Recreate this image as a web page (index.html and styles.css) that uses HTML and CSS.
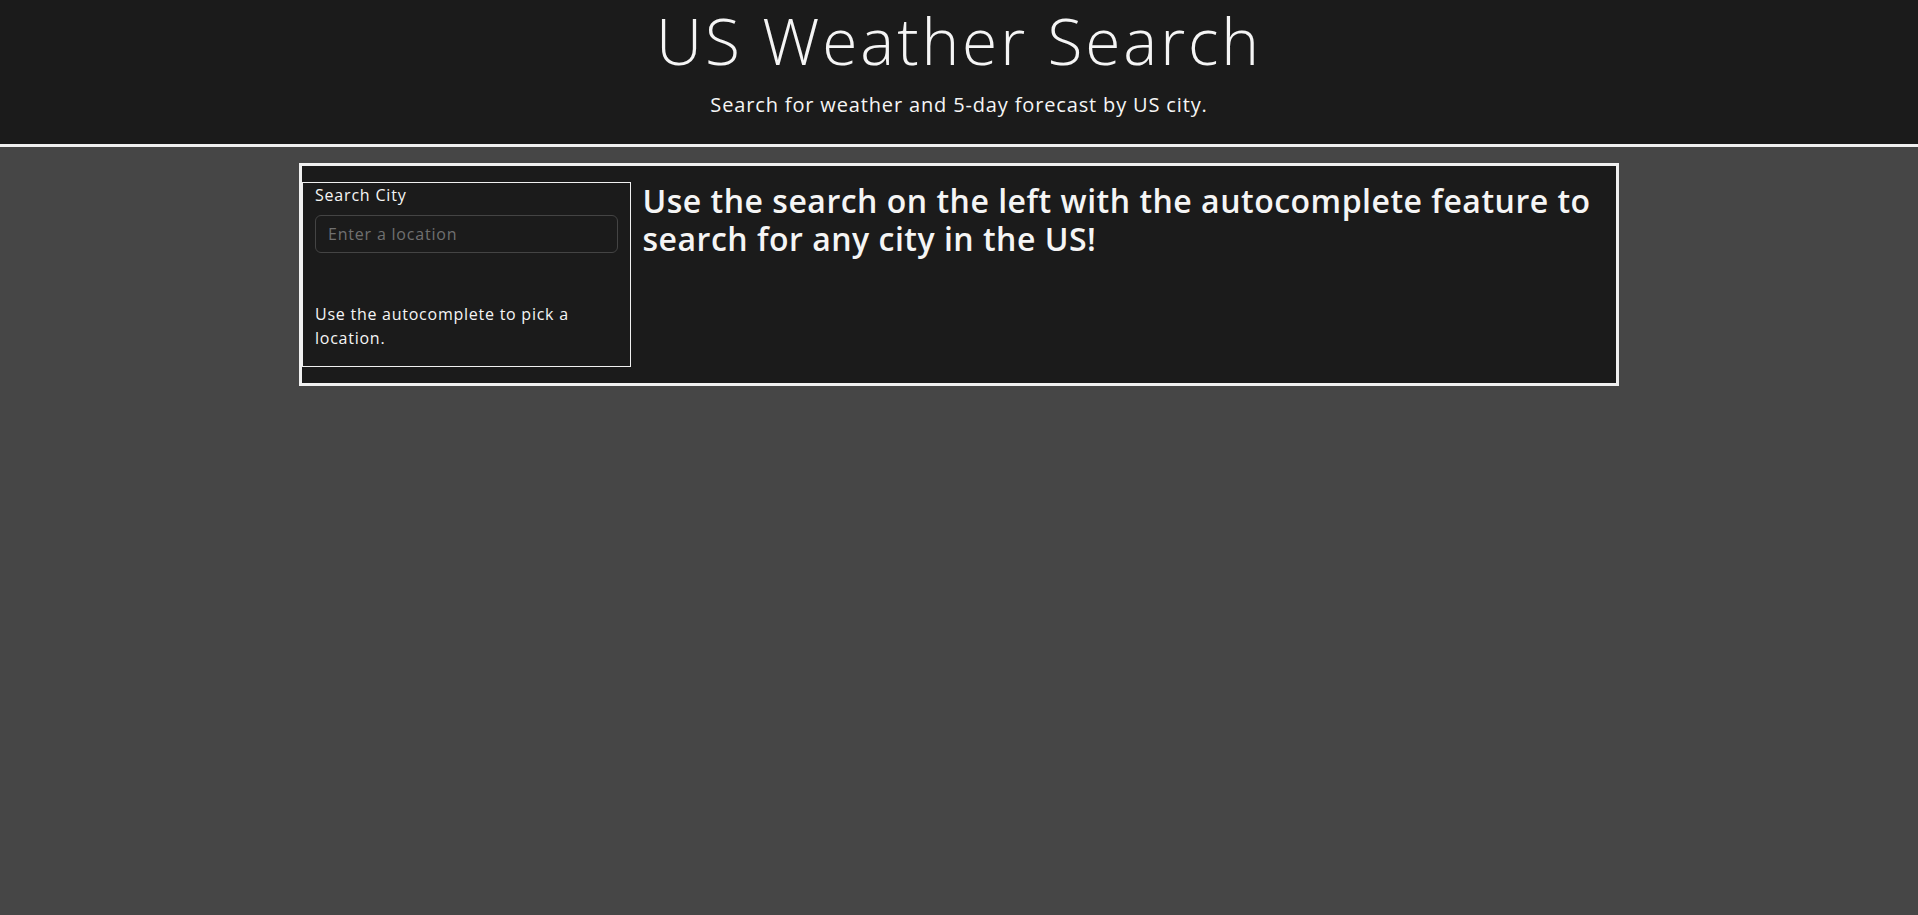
FILE: index.html
```html
<!DOCTYPE html>
<html lang="en">
<head>
<meta charset="utf-8">
<title>US Weather Search</title>
<link rel="stylesheet" href="styles.css">
</head>
<body>
<header class="site-header">
  <h1 class="title">US Weather Search</h1>
  <p class="lead">Search for weather and 5-day forecast by US city.</p>
</header>
<main class="container">
  <div class="row">
    <aside class="col-side">
      <label class="form-label" for="city">Search City</label>
      <input class="form-control" id="city" type="text" placeholder="Enter a location">
      <p class="hint">Use the autocomplete to pick a location.</p>
    </aside>
    <section class="col-main">
      <h2 class="intro">Use the search on the left with the autocomplete feature to search for any city in the US!</h2>
    </section>
  </div>
</main>
</body>
</html>
```
FILE: styles.css
```css
* { box-sizing: border-box; }
html, body { margin: 0; padding: 0; }
body {
  background: #464646;
  color: #f5f5f5;
  font-family: "Open Sans", "Noto Sans", sans-serif;
  font-size: 16px;
  line-height: 1.5;
}
.site-header {
  background: #1b1b1b;
  border-bottom: 3px solid #f0f0f0;
  text-align: center;
  padding: 3px 0 8px;
}
.title {
  margin: 0 0 10px;
  font-size: 64px;
  font-weight: 300;
  line-height: 1.2;
  letter-spacing: 2.9px;
}
.lead {
  margin: 0 0 16px;
  font-size: 20px;
  font-weight: 400;
  line-height: 1.5;
  letter-spacing: 0.85px;
}
.container {
  width: 1320px;
  margin: 16px auto 0;
  background: #1b1b1b;
  border: 3px solid #f0f0f0;
}
.row {
  display: flex;
  margin: 16px 0;
}
.col-side {
  flex: 0 0 25%;
  border: 1px solid #f0f0f0;
  padding: 0 12px;
}
.form-label {
  display: block;
  margin-bottom: 8px;
  font-size: 16px;
  letter-spacing: 0.8px;
}
.form-control {
  display: block;
  width: 100%;
  height: 38px;
  padding: 6px 12px;
  background: #1b1b1b;
  color: #f5f5f5;
  border: 1px solid #444;
  border-radius: 6px;
  font: inherit;
  font-size: 16px;
  letter-spacing: 0.8px;
}
.form-control::placeholder { color: #707070; }
.hint {
  margin: 49px 0 16px;
  font-size: 16px;
  letter-spacing: 0.75px;
}
.col-main {
  flex: 1;
  padding: 0 12px;
}
.intro {
  margin: 0;
  font-size: 32px;
  font-weight: 600;
  line-height: 1.2;
  letter-spacing: 0.5px;
}
```
